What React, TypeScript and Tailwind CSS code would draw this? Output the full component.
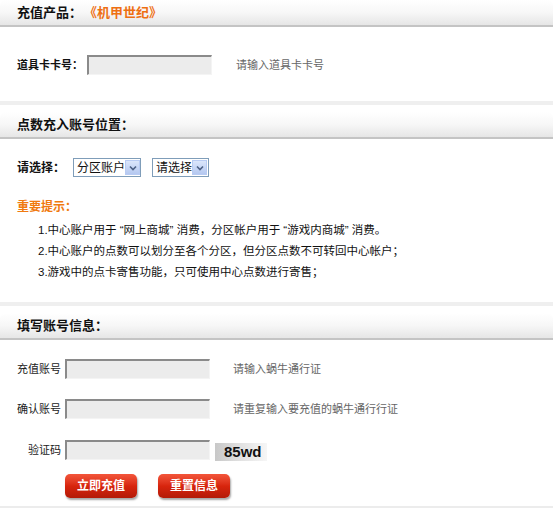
import React from "react";

const font = { fontFamily: '"Liberation Sans", "Noto Sans CJK SC", sans-serif' };

function Header({ children }: { children: React.ReactNode }) {
    return (
        <div className="h-[27px] flex items-center pl-[17px] rounded-tl-[6px] rounded-tr-[6px] border-b-2 border-[#c4c4c4] bg-gradient-to-b from-[#ffffff] via-[#f7f7f7] to-[#e6e6e6] text-[13px] font-bold text-[#111] whitespace-nowrap">
            {children}
        </div>
    );
}

function Band() {
    return <div className="h-[4px] bg-[#efefef]" />;
}

function Field({ w = "w-[125px]" }: { w?: string }) {
    return (
        <div className={`${w} shrink-0 h-[20px] bg-[#ececec] border-t-2 border-l-2 border-[#8a8a8a] border-b border-r border-b-[#f4f4f4] border-r-[#f4f4f4]`} />
    );
}

function Select({ label, w }: { label: string; w: string }) {
    return (
        <div className={`${w} shrink-0 h-[19px] flex items-center justify-between border border-[#7f9db9] bg-white pl-[3px] pr-[1px] text-[12px] text-[#111] whitespace-nowrap`}>
            <span>{label}</span>
            <span className="w-[15px] h-[15px] shrink-0 bg-gradient-to-b from-[#dbe6fb] to-[#b5c8f0] border border-[#b8cbf3] flex items-center justify-center">
                <svg width="8" height="6" viewBox="0 0 8 6">
                    <path d="M1 1.5 L4 4.5 L7 1.5" stroke="#4d6185" strokeWidth="1.6" fill="none" />
                </svg>
            </span>
        </div>
    );
}

function RedButton({ children }: { children: React.ReactNode }) {
    return (
        <div className="w-[72px] h-[24px] rounded-[5px] bg-gradient-to-b from-[#f3553a] via-[#d8250d] to-[#b31a08] shadow-[1px_2px_2px_rgba(0,0,0,0.35)] flex items-center justify-center text-white text-[12px] font-bold">
            {children}
        </div>
    );
}

export default function App() {
    return (
        <div className="w-[553px] h-[508px] bg-white overflow-hidden whitespace-nowrap" style={font}>
            <Header>
                充值产品：<span className="ml-[2px] text-[#ee6f12]">《机甲世纪》</span>
            </Header>
            <div className="h-[74px] flex items-center pl-[17px] text-[11px] pt-[2px]">
                <span className="w-[70px] shrink-0 text-[#111] font-bold">道具卡卡号：</span>
                <Field />
                <span className="ml-[24px] text-[#666]">请输入道具卡卡号</span>
            </div>
            <Band />
            <div className="h-[7px]" />
            <Header>点数充入账号位置：</Header>
            <div className="h-[163px] pl-[17px] text-[12px] text-[#111]">
                <div className="pt-[19px] flex items-center">
                    <span className="w-[56px] shrink-0 font-bold">请选择：</span>
                    <Select label="分区账户" w="w-[68px]" />
                    <div className="w-[11px] shrink-0" />
                    <Select label="请选择" w="w-[57px]" />
                </div>
                <div className="mt-[21px] text-[#f07a10] font-bold">重要提示：</div>
                <div className="pl-[21px] mt-[6px] flex flex-col gap-[4px] leading-[17px] text-[11.5px]">
                    <div>1.中心账户用于 “网上商城” 消费，分区帐户用于 “游戏内商城” 消费。</div>
                    <div>2.中心账户的点数可以划分至各个分区，但分区点数不可转回中心帐户；</div>
                    <div>3.游戏中的点卡寄售功能，只可使用中心点数进行寄售；</div>
                </div>
            </div>
            <Band />
            <div className="h-[7px]" />
            <Header>填写账号信息：</Header>
            <div className="pl-[17px] text-[11px] text-[#222]">
                <div className="pt-[19px] flex items-center">
                    <span className="w-[48px] shrink-0">充值账号</span>
                    <Field w="w-[145px]" />
                    <span className="ml-[23px] text-[#666]">请输入蜗牛通行证</span>
                </div>
                <div className="mt-[20px] flex items-center">
                    <span className="w-[48px] shrink-0">确认账号</span>
                    <Field w="w-[145px]" />
                    <span className="ml-[23px] text-[#666]">请重复输入要充值的蜗牛通行行证</span>
                </div>
                <div className="mt-[20px] flex items-center">
                    <span className="w-[48px] shrink-0 pl-[11px]">验证码</span>
                    <Field w="w-[145px]" />
                    <span className="ml-[5px] mt-[4px] w-[52px] h-[18px] bg-gradient-to-r from-[#c8c8c8] via-[#e2e2e2] to-[#f6f6f6] flex items-center pl-[9px] text-[15px] font-bold text-[#111]">
                        85wd
                    </span>
                </div>
                <div className="mt-[13px] pl-[48px] flex gap-[21px]">
                    <RedButton>立即充值</RedButton>
                    <RedButton>重置信息</RedButton>
                </div>
            </div>
            <div className="mt-[8px] h-[3px] bg-[#ececec]" />
        </div>
    );
}
